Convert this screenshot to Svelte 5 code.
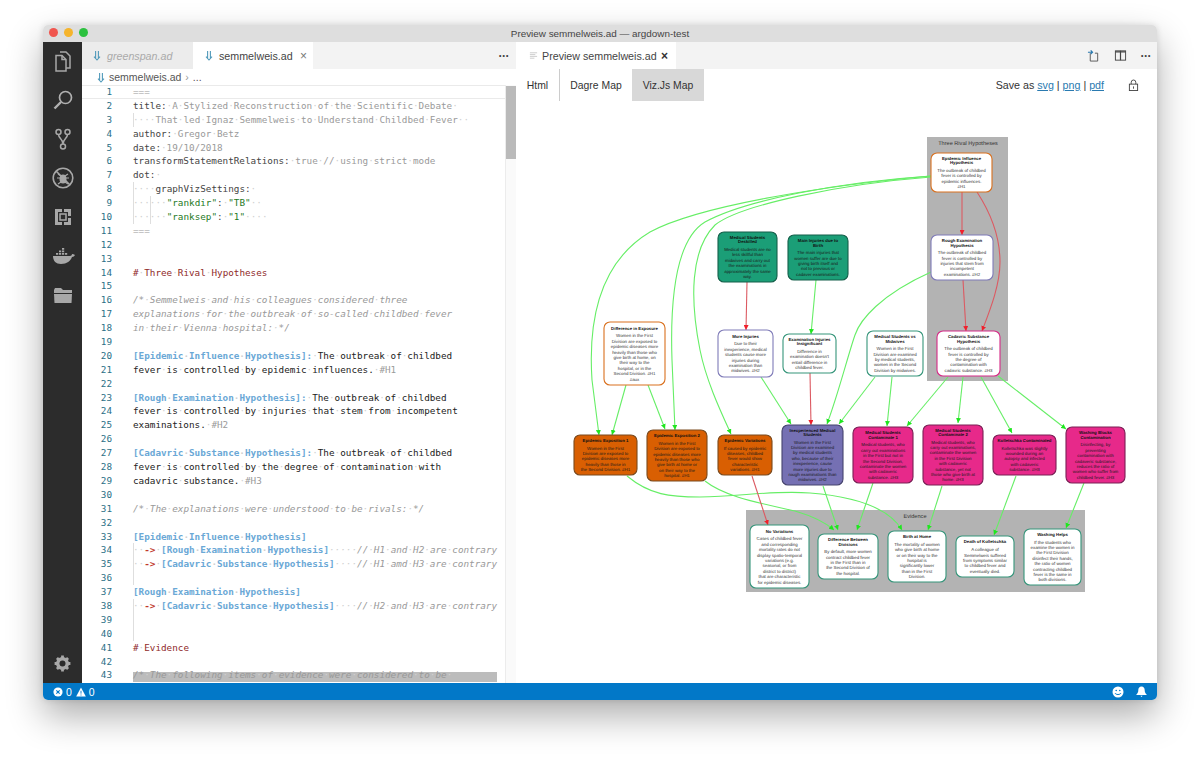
<script lang="ts">
  // VS Code window: Argdown source on the left, its rendered argument map on the right.
  type Seg = [string, string];

  const b = (s: string): Seg => ["ref", s];
  const t = (s: string): Seg => ["plain", s];
  const k = (s: string): Seg => ["key", s];
  const v = (s: string): Seg => ["val", s];
  const c = (s: string): Seg => ["comment", s];
  const h = (s: string): Seg => ["head", s];
  const a = (s: string): Seg => ["arrow", s];
  const g = (s: string): Seg => ["str", s];
  const tag = (s: string): Seg => ["val", s];
  const d = (s: string): Seg => ["fence", s];

  const code: Seg[][] = [
    [d("===")],
    [k("title:"), v(" A Stylized Reconstruction of the Scientific Debate ")],
    [v("    That led Ignaz Semmelweis to Understand Childbed Fever  ")],
    [k("author:"), v(" Gregor Betz")],
    [k("date:"), v(" 19/10/2018")],
    [k("transformStatementRelations:"), v(" true // using strict mode")],
    [k("dot:"), v(" ")],
    [v("    "), k("graphVizSettings:"), v(" ")],
    [v("      "), g('"rankdir"'), k(": "), g('"TB"'), v("  ")],
    [v("      "), g('"ranksep"'), k(": "), g('"1"'), v("    ")],
    [d("===")],
    [],
    [],
    [h("# Three Rival Hypotheses")],
    [],
    [c("/* Semmelweis and his colleagues considered three")],
    [c("explanations for the outbreak of so-called childbed fever")],
    [c("in their Vienna hospital: */")],
    [],
    [b("[Epidemic Influence Hypothesis]:"), t(" The outbreak of childbed")],
    [t("fever is controlled by epidemic influences. "), tag("#H1")],
    [],
    [b("[Rough Examination Hypothesis]:"), t(" The outbreak of childbed")],
    [t("fever is controlled by injuries that stem from incompetent")],
    [t("examinations. "), tag("#H2")],
    [],
    [b("[Cadavric Substance Hypothesis]:"), t(" The outbreak of childbed")],
    [t("fever is controlled by the degree of contamination with")],
    [t("cadavric substance. "), tag("#H3")],
    [],
    [c("/* The explanations were understood to be rivals: */")],
    [],
    [b("[Epidemic Influence Hypothesis]")],
    [v("  "), a("->"), v(" "), b("[Rough Examination Hypothesis]"), c("     // H1 and H2 are contrary")],
    [v("  "), a("->"), v(" "), b("[Cadavric Substance Hypothesis]"), c("    // H1 amd H3 are contrary")],
    [],
    [b("[Rough Examination Hypothesis]")],
    [v("  "), a("->"), v(" "), b("[Cadavric Substance Hypothesis]"), c("    // H2 and H3 are contrary")],
    [],
    [],
    [h("# Evidence")],
    [],
    [c("/* The following items of evidence were considered to be ")],
  ];

  // indent guide columns by line number
  const guides: Record<number, number[]> = {
    3: [0], 8: [0], 9: [0, 3], 10: [0, 3], 34: [0], 35: [0], 36: [0], 38: [0], 39: [0], 40: [0],
  };

  type Node = { x: number; y: number; w: number; h: number; kind: string; title: string[]; body: string[] };

  const nodes: Node[] = [
    { x: 931, y: 153, w: 61, h: 39, kind: "o-line", title: ["Epidemic Influence", "Hypothesis"], body: ["The outbreak of childbed", "fever is controlled by", "epidemic influences.", "#H1"] },
    { x: 931, y: 235, w: 62, h: 45, kind: "p-line", title: ["Rough Examination", "Hypothesis"], body: ["The outbreak of childbed", "fever is controlled by", "injuries that stem from", "incompetent", "examinations. #H2"] },
    { x: 937, y: 331, w: 63, h: 45, kind: "m-line", title: ["Cadavric Substance", "Hypothesis"], body: ["The outbreak of childbed", "fever is controlled by", "the degree of", "contamination with", "cadavric substance. #H3"] },
    { x: 718, y: 232, w: 59, h: 50, kind: "g-fill", title: ["Medical Students", "Deskilled"], body: ["Medical students are no", "less skillful than", "midwives and carry out", "the examinations in", "approximately the same", "way."] },
    { x: 788, y: 235, w: 60, h: 45, kind: "g-fill", title: ["Main Injuries due to", "Birth"], body: ["The main injuries that", "women suffer are due to", "giving birth itself and", "not to previous or", "cadaver examinations."] },
    { x: 604, y: 322, w: 61, h: 63, kind: "o-line", title: ["Difference in Exposure"], body: ["Women in the First", "Division are exposed to", "epidemic diseases more", "heavily than those who", "give birth at home, on", "their way to the", "hospital, or in the", "Second Division. #H1", "#aux"] },
    { x: 718, y: 330, w: 55, h: 47, kind: "p-line", title: ["More Injuries"], body: ["Due to their", "inexperience, medical", "students cause more", "injuries during", "examination than", "midwives. #H2"] },
    { x: 783, y: 334, w: 53, h: 39, kind: "g-line", title: ["Examination Injuries", "Insignificant"], body: ["Difference in", "examination doesn't", "entail difference in", "childbed fever."] },
    { x: 867, y: 331, w: 56, h: 45, kind: "g-line", title: ["Medical Students vs", "Midwives"], body: ["Women in the First", "Division are examined", "by medical students,", "women in the Second", "Division by midwives."] },
    { x: 574, y: 435, w: 63, h: 40, kind: "o-fill", title: ["Epidemic Exposition 1"], body: ["Women in the First", "Division are exposed to", "epidemic diseases more", "heavily than those in", "the Second Division. #H1"] },
    { x: 647, y: 430, w: 60, h: 51, kind: "o-fill", title: ["Epidemic Exposition 2"], body: ["Women in the First", "Division are exposed to", "epidemic diseases more", "heavily than those who", "give birth at home or", "on their way to the", "hospital. #H1"] },
    { x: 718, y: 435, w: 54, h: 40, kind: "o-fill", title: ["Epidemic Variations"], body: ["If caused by epidemic", "diseases, childbed", "fever would show", "characteristic", "variations. #H1"] },
    { x: 782, y: 425, w: 61, h: 60, kind: "p-fill", title: ["Inexperienced Medical", "Students"], body: ["Women in the First", "Division are examined", "by medical students", "who, because of their", "inexperience, cause", "more injuries due to", "rough examinations than", "midwives. #H2"] },
    { x: 853, y: 427, w: 60, h: 56, kind: "m-fill", title: ["Medical Students", "Contaminate 1"], body: ["Medical students, who", "carry out examinations", "in the First but not in", "the Second Division,", "contaminate the women", "with cadaveric", "substance. #H3"] },
    { x: 923, y: 425, w: 60, h: 60, kind: "m-fill", title: ["Medical Students", "Contaminate 2"], body: ["Medical students, who", "carry out examinations,", "contaminate the women", "in the First Division", "with cadaveric", "substance, yet not", "those who give birth at", "home. #H3"] },
    { x: 993, y: 435, w: 63, h: 40, kind: "m-fill", title: ["Kolletschka Contaminated"], body: ["Kolletschka was slightly", "wounded during an", "autopsy and infected", "with cadaveric", "substance. #H3"] },
    { x: 1066, y: 427, w: 59, h: 56, kind: "m-fill", title: ["Washing Blocks", "Contamination"], body: ["Disinfecting, by", "preventing", "contamination with", "cadaveric substance,", "reduces the ratio of", "women who suffer from", "childbed fever. #H3"] },
    { x: 750, y: 525, w: 59, h: 63, kind: "g-line", title: ["No Variations"], body: ["Cases of childbed fever", "and corresponding", "mortality rates do not", "display spatio-temporal", "variations (e.g.", "seasonal, or from", "district to district)", "that are characteristic", "for epidemic diseases."] },
    { x: 818, y: 534, w: 60, h: 45, kind: "g-line", title: ["Difference Between", "Divisions"], body: ["By default, more women", "contract childbed fever", "in the First than in", "the Second Division of", "the hospital."] },
    { x: 888, y: 531, w: 58, h: 51, kind: "g-line", title: ["Birth at Home"], body: ["The mortality of women", "who give birth at home", "or on their way to the", "hospital is", "significantly lower", "than in the First", "Division."] },
    { x: 956, y: 536, w: 58, h: 41, kind: "g-line", title: ["Death of Kolletschka"], body: ["A colleague of", "Semmelweis suffered", "from symptoms similar", "to childbed fever and", "eventually died."] },
    { x: 1024, y: 529, w: 57, h: 56, kind: "g-line", title: ["Washing Helps"], body: ["If the students who", "examine the women in", "the First Division", "disinfect their hands,", "the ratio of women", "contracting childbed", "fever is the same in", "both divisions."] },
  ];

  const greenEdges = [
    "M931 176C830 185 700 205 650 232C600 262 588 320 592 380L599 435",
    "M931 176C840 182 745 200 705 222C675 240 670 300 672 360L675 430",
    "M931 177C840 184 740 205 715 225C690 250 690 300 700 350C706 380 720 410 731 434",
    "M931 272C880 295 860 320 855 335C848 355 838 395 827 424",
    "M816 280L811 334",
    "M626 385L612 435",
    "M648 385L665 429",
    "M761 377L791 424",
    "M875 377L839 424",
    "M892 377L887 426",
    "M948 377L907 426",
    "M963 377L958 423",
    "M981 377L1012 433",
    "M998 376L1066 429",
    "M627 476C650 495 670 497 700 497C740 497 770 490 810 493C860 497 890 510 902 530",
    "M705 481C725 497 760 503 795 511C812 516 825 522 834 530",
    "M823 486L838 530",
    "M873 483L857 530",
    "M942 486L928 530",
    "M1016 476L994 535",
    "M1084 483L1066 528",
  ];

  const redEdges = [
    "M962 192L962 235",
    "M977 192C992 215 1000 240 1000 262C1000 285 990 310 982 331",
    "M963 280L966 331",
    "M747 282L746 330",
    "M810 373L811 425",
    "M752 476L768 525",
  ];

  const TITLE_LH = 4.2;
  const BODY_LH = 5.4;
  const GAP = 7.7;

  // first baseline of a centred title + body block
  function firstLine(n: Node) {
    const span = (n.title.length - 1) * TITLE_LH + GAP + (n.body.length - 1) * BODY_LH;
    return n.y + n.h / 2 - span / 2 + 1.6;
  }
</script>

{#snippet mdIcon()}
  <svg class="md" viewBox="0 0 8 11" width="8" height="11">
    <path d="M2.6 1v7M5.4 1v7M1 6.6L4 10l3-3.4" fill="none" stroke="#519aba" stroke-width="1.1" />
  </svg>
{/snippet}

<div class="page">
  <div class="window">
    <header class="titlebar">
      <div class="lights">
        <i class="red"></i><i class="yellow"></i><i class="green"></i>
      </div>
      <span>Preview semmelweis.ad — argdown-test</span>
    </header>

    <div class="body">
      <nav class="activity">
        <div class="act first">
          <svg viewBox="0 0 24 24" width="24" height="24" fill="none" stroke="#a8a8a8" stroke-width="1.5">
            <path d="M9 3h6l4 4v12h-4" /><path d="M5 6.5h6l4 4V22H5z" /><path d="M11 6.5v4h4" />
          </svg>
        </div>
        <div class="act">
          <svg viewBox="0 0 24 24" width="24" height="24" fill="none" stroke="#b0b0b0" stroke-width="1.7">
            <circle cx="14.5" cy="9.5" r="6" /><path d="M10 14L3.5 20.5" stroke-width="2.4" />
          </svg>
        </div>
        <div class="act">
          <svg viewBox="0 0 24 24" width="24" height="24" fill="none" stroke="#a8a8a8" stroke-width="1.5">
            <circle cx="7.5" cy="5" r="2.5" /><circle cx="16.5" cy="5" r="2.5" /><circle cx="12" cy="19.5" r="2.5" />
            <path d="M7.5 7.5c0 4 4.5 4 4.5 9.500M16.500 7.500c0 4-4.500 4-4.500 9.500" />
          </svg>
        </div>
        <div class="act">
          <svg viewBox="0 0 24 24" width="24" height="24" fill="none" stroke="#a8a8a8" stroke-width="1.6">
            <circle cx="12" cy="12" r="9.800" />
            <path d="M5 5l14 14" />
            <ellipse cx="12" cy="13" rx="3.500" ry="4.500" fill="#a8a8a8" stroke="none" />
            <path d="M6 12h12M7 8l3 2M17 8l-3 2M7 18l3-2M17 18l-3-2" stroke-width="1.200" />
          </svg>
        </div>
        <div class="act">
          <svg viewBox="0 0 24 24" width="24" height="24" fill="#a8a8a8">
            <path d="M4 4h7v3H7v10h4v3H4zM13 4h7v7h-3V7h-4zM17 13h3v7h-7v-3h4z" />
            <rect x="9" y="9" width="6" height="6" fill="none" stroke="#a8a8a8" stroke-width="1.500" />
          </svg>
        </div>
        <div class="act">
          <svg viewBox="0 0 24 24" width="24" height="24" fill="#a8a8a8">
            <path d="M2 12h17c1 0 2-1 2-2 1 0 2 .3 3 1-.6 1.300-1.600 2-3 2-1.500 4-5 7-11 7-5 0-8-3-8-8z" />
            <path d="M5 10.800h2.200V9H5zM8 10.800h2.200V9H8zM11 10.800h2.200V9H11zM14 10.800h2.200V9H14zM8 8.300h2.200V6.500H8zM11 8.300h2.200V6.500H11zM11 5.800h2.200V4H11z" />
          </svg>
        </div>
        <div class="act">
          <svg viewBox="0 0 24 24" width="24" height="24" fill="#a8a8a8">
            <path d="M3 7l1-2h6l2 2h9v3H3z" /><path d="M3 11h18l-.5 9H3.500z" />
          </svg>
        </div>
        <div class="act gear">
          <svg viewBox="0 0 24 24" width="19" height="19">
            <circle cx="12" cy="12" r="6" fill="none" stroke="#a8a8a8" stroke-width="4.500" />
            <path d="M12 2v20M2 12h20M5 5l14 14M19 5L5 19" stroke="#a8a8a8" stroke-width="3.500" />
            <circle cx="12" cy="12" r="3.800" fill="#2c2c2c" />
          </svg>
        </div>
      </nav>

      <section class="group left">
        <div class="tabs">
          <div class="tab inactive">{@render mdIcon()}<span>greenspan.ad</span></div>
          <div class="tab active">{@render mdIcon()}<span>semmelweis.ad</span><b class="close">×</b></div>
          <div class="actions"><span class="more">···</span></div>
        </div>
        <div class="crumbs">{@render mdIcon()}<span>semmelweis.ad</span><em>›</em><span>...</span></div>
        <div class="editor">
          <div class="code">
            {#each code as segs, i}
              <div class="line" class:current={i === 0} class:picked={i === 42}>
                <span class="num">{i + 1}</span>
                <span class="src">{#each guides[i + 1] ?? [] as col}<i class="guide" style="left: {col * 5.6}px"></i>{/each}{#each segs as [cls, text]}<span class={cls}>{#each text.split(/( )/) as tok}{#if tok === " "}<span class="ws">·</span>{:else}{tok}{/if}{/each}</span>{/each}</span>
              </div>
            {/each}
          </div>
          <div class="scrollbar"><div class="thumb"></div></div>
        </div>
      </section>

      <section class="group right">
        <div class="tabs">
          <div class="tab active preview">
            <svg viewBox="0 0 10 10" width="9" height="9" fill="none" stroke="#c8c8c8" stroke-width="1"><path d="M1 2h8M1 4h6M1 6h8M1 8h5" /></svg>
            <span>Preview semmelweis.ad</span><b class="close dark">×</b>
          </div>
          <div class="actions icons">
            <svg viewBox="0 0 14 14" width="13" height="13" fill="none" stroke="#555" stroke-width="1"><path d="M3.500 4.500v8.500h8V4.500h-3" /><path d="M1 3.500h5M4 1.500l2 2-2 2" stroke="#2a7ab0" stroke-width="1.200" /></svg>
            <svg viewBox="0 0 14 14" width="13" height="13" fill="none" stroke="#444" stroke-width="1"><rect x="1.500" y="2" width="11" height="10" /><path d="M1.500 3h11M7 2v10" stroke-width="1.300" /></svg>
            <span class="more">···</span>
          </div>
        </div>

        <div class="view-bar">
          <div class="view-tabs">
            <span class="view-tab first">Html</span>
            <span class="view-tab second">Dagre Map</span>
            <span class="view-tab on">Viz.Js Map</span>
          </div>
          <div class="save">Save as <a href="#svg">svg</a> | <a href="#png">png</a> | <a href="#pdf">pdf</a></div>
          <svg class="lock" viewBox="0 0 12 14" width="11" height="13" fill="none" stroke="#444" stroke-width="1">
            <rect x="1.500" y="5.500" width="9" height="7" /><path d="M3.500 5.500V3.500a2.500 2.500 0 0 1 5 0v2M6 8v2.500" />
          </svg>
        </div>

        <svg class="map" viewBox="516 101 641 582">
          <defs>
            <marker id="tip-green" viewBox="0 0 10 10" refX="10" refY="5" markerUnits="userSpaceOnUse" markerWidth="5" markerHeight="5" orient="auto">
              <path d="M0 0L10 5L0 10z" fill="#1fe61f" />
            </marker>
            <marker id="tip-red" viewBox="0 0 10 10" refX="10" refY="5" markerUnits="userSpaceOnUse" markerWidth="5" markerHeight="5" orient="auto">
              <path d="M0 0L10 5L0 10z" fill="#f0202c" />
            </marker>
          </defs>

          <rect class="cluster" x="927" y="137" width="81" height="244" />
          <rect class="cluster" x="746" y="510" width="339" height="82" />
          <text class="cluster-label" x="968" y="144.500">Three Rival Hypotheses</text>
          <text class="cluster-label" x="915" y="517.500">Evidence</text>

          {#each greenEdges as path}
            <path class="edge green" d={path} marker-end="url(#tip-green)" />
          {/each}
          {#each redEdges as path}
            <path class="edge red" d={path} marker-end="url(#tip-red)" />
          {/each}

          {#each nodes as n}
            {@const top = firstLine(n)}
            {@const bodyTop = top + (n.title.length - 1) * TITLE_LH + GAP}
            <g class={n.kind}>
              <rect x={n.x} y={n.y} width={n.w} height={n.h} rx="6" />
              {#each n.title as line, i}
                <text class="node-title" x={n.x + n.w / 2} y={top + i * TITLE_LH}>{line}</text>
              {/each}
              {#each n.body as line, i}
                <text class="node-body" x={n.x + n.w / 2} y={bodyTop + i * BODY_LH}>{line}</text>
              {/each}
            </g>
          {/each}
        </svg>
      </section>
    </div>

    <footer class="status">
      <svg viewBox="0 0 12 12" width="10" height="10"><circle cx="6" cy="6" r="5.500" fill="#fff" /><path d="M4 4l4 4M8 4l-4 4" stroke="#007acc" stroke-width="1.300" /></svg>
      <span>0</span>
      <svg class="warn" viewBox="0 0 12 12" width="10" height="10"><path d="M6 .5L11.800 11.500H.2z" fill="#fff" /><path d="M6 4.500v3.500M6 9v1.200" stroke="#007acc" stroke-width="1.100" /></svg>
      <span>0</span>
      <div class="status-right">
        <svg viewBox="0 0 12 12" width="12" height="12"><circle cx="6" cy="6" r="5.500" fill="#fff" /><circle cx="4.200" cy="4.500" r=".8" fill="#007acc" /><circle cx="7.800" cy="4.500" r=".8" fill="#007acc" /><path d="M3 7c.8 2 5.200 2 6 0" fill="none" stroke="#007acc" stroke-width="1" /></svg>
        <svg viewBox="0 0 12 12" width="11" height="11"><path d="M6 .5c2.500 0 3.500 2 3.500 4 0 2.500 1 3.500 2 4.500v.8H.5V9c1-1 2-2 2-4.500 0-2 1-4 3.500-4z" fill="#fff" /><path d="M4.800 10.500h2.400L6 12z" fill="#fff" /></svg>
      </div>
    </footer>
  </div>
</div>

<style>
  :global(body) {
    margin: 0;
    background: #fff;
    overflow: hidden;
  }

  .page {
    padding: 25px 43px 62px;
    font-family: "Liberation Sans", Arial, sans-serif;
  }

  .window {
    height: 675px;
    display: flex;
    flex-direction: column;
    border-radius: 5px;
    overflow: hidden;
    box-shadow: 0 16px 36px rgba(0, 0, 0, 0.32), 0 0 6px rgba(0, 0, 0, 0.12);
  }

  .titlebar {
    position: relative;
    height: 17px;
    flex-shrink: 0;
    background: #dedede;
    display: flex;
    align-items: center;
    justify-content: center;
    font-size: 9.9px;
    color: #444;
  }

  .lights {
    position: absolute;
    left: 6px;
    top: 3px;
    display: flex;
    gap: 6px;
  }

  .lights i {
    width: 9px;
    height: 9px;
    border-radius: 50%;
  }

  .lights .red { background: #f0564f; }
  .lights .yellow { background: #f5b42c; }
  .lights .green { background: #2cc13f; }

  .body {
    flex: 1;
    min-height: 0;
    display: flex;
  }

  .activity {
    width: 39px;
    flex-shrink: 0;
    background: #2c2c2c;
    display: flex;
    flex-direction: column;
  }

  .act {
    height: 39px;
    flex-shrink: 0;
    display: flex;
    align-items: center;
    justify-content: center;
  }

  .act.first {
    margin-top: -1px;
  }

  .gear {
    margin-top: auto;
  }

  .group {
    display: flex;
    flex-direction: column;
    min-width: 0;
    background: #fff;
  }

  .left {
    width: 434px;
    flex-shrink: 0;
  }

  .right {
    flex: 1;
  }

  .tabs {
    height: 27px;
    flex-shrink: 0;
    display: flex;
    background: #f3f3f3;
  }

  .tab {
    display: flex;
    align-items: center;
    font-size: 10.7px;
    color: #555;
    white-space: nowrap;
  }

  .tab.inactive {
    width: 111px;
    padding-left: 11px;
    gap: 6px;
    box-sizing: border-box;
    background: #ececec;
    color: #aaa;
    font-style: italic;
  }

  .tab.active {
    width: 120px;
    padding-left: 12px;
    gap: 6px;
    box-sizing: border-box;
    background: #fff;
    color: #444;
  }

  .tab.preview {
    width: 160px;
    padding-left: 13px;
    gap: 4px;
  }

  .close {
    margin-left: auto;
    margin-right: 6px;
    font-size: 12px;
    font-weight: 400;
    color: #777;
  }

  .close.dark {
    margin-right: 8px;
    color: #333;
    font-weight: 700;
  }

  .actions {
    margin-left: auto;
    display: flex;
    align-items: center;
    padding-right: 7px;
    color: #444;
  }

  .actions.icons {
    gap: 14px;
    padding-right: 6px;
  }

  .more {
    font-weight: 700;
    font-size: 12px;
    letter-spacing: -0.5px;
  }

  .crumbs {
    height: 16px;
    flex-shrink: 0;
    display: flex;
    align-items: center;
    gap: 4px;
    padding-left: 15px;
    font-size: 10.5px;
    color: #555;
  }

  .crumbs em {
    font-style: normal;
    color: #999;
  }

  .md {
    flex-shrink: 0;
  }

  .editor {
    flex: 1;
    min-height: 0;
    display: flex;
    overflow: hidden;
  }

  .code {
    flex: 1;
    min-width: 0;
    overflow: hidden;
    font-family: "DejaVu Sans Mono", "Liberation Mono", monospace;
    font-size: 9.3px;
    line-height: 13.9px;
  }

  .line {
    display: flex;
    height: 13.9px;
    white-space: pre;
  }

  .line.current {
    box-shadow: inset 0 1px #eaeaea, inset 0 -1px #eaeaea;
  }

  .num {
    width: 30px;
    flex-shrink: 0;
    text-align: right;
    color: #2b6f86;
    margin-right: 21px;
  }

  .src {
    position: relative;
    flex: 1;
    min-width: 0;
  }

  .picked .src {
    background: linear-gradient(to bottom, transparent 4px, #bcbcbc 4px);
    margin-right: 8px;
  }

  .guide {
    position: absolute;
    top: 0;
    bottom: 0;
    width: 1px;
    background: #dedede;
  }

  .ws { color: #d0d0d0; }
  .key { color: #444; }
  .val { color: #9a9a9a; }
  .fence { color: #bbb; }
  .str { color: #1f7a1f; }
  .head { color: #8f2a2a; }
  .plain { color: #222; }
  .comment { color: #999; font-style: italic; }
  .ref { color: #6aa8d6; font-weight: 700; }
  .arrow { color: #c0392b; font-weight: 700; }

  .scrollbar {
    width: 10px;
    flex-shrink: 0;
    background: #fafafa;
    border-left: 1px solid #ececec;
  }

  .thumb {
    height: 73px;
    margin-top: 1px;
    background: #bababa;
  }

  .view-bar {
    height: 32px;
    flex-shrink: 0;
    display: flex;
    align-items: center;
    font-size: 10.4px;
    color: #333;
  }

  .view-tabs {
    display: flex;
    align-self: stretch;
  }

  .view-tab {
    display: flex;
    align-items: center;
    justify-content: center;
    box-sizing: border-box;
    width: 72px;
  }

  .view-tab.first {
    width: 44px;
    border-right: 1px solid #ccc;
  }

  .view-tab.on {
    background: #d8d8d8;
  }

  .save {
    margin-left: auto;
    font-size: 10.7px;
  }

  .save a {
    color: #2a7ab0;
  }

  .lock {
    margin: 0 18px 0 24px;
  }

  .map {
    display: block;
    flex: 1;
    min-height: 0;
    width: 100%;
    text-rendering: geometricPrecision;
  }

  .cluster { fill: #b3b3b3; }

  .cluster-label {
    font-size: 5.6px;
    fill: #333;
    text-anchor: middle;
  }

  .edge {
    fill: none;
    stroke-width: 1.1;
  }

  .edge.green { stroke: #66ee66; }
  .edge.red { stroke: #dc5a62; stroke-width: 1.1; }

  g rect { stroke-width: 1.1; fill: #fff; }

  .o-line rect { stroke: #d9701e; }
  .p-line rect { stroke: #7f7bb8; }
  .m-line rect { stroke: #d62b87; }
  .g-line rect { stroke: #35957a; }
  .o-fill rect { fill: #d95f02; stroke: #7a4a1e; }
  .g-fill rect { fill: #1b9e77; stroke: #155f4a; }
  .p-fill rect { fill: #7570b3; stroke: #46446e; }
  .m-fill rect { fill: #e7298a; stroke: #7a2055; }

  .node-title {
    font-size: 4.3px;
    font-weight: 700;
    fill: #111;
    text-anchor: middle;
  }

  .node-body {
    font-size: 4.4px;
    fill: #333;
    text-anchor: middle;
  }

  .o-fill .node-body, .g-fill .node-body, .p-fill .node-body, .m-fill .node-body {
    fill: #1a1a1a;
  }

  .status {
    height: 17px;
    flex-shrink: 0;
    background: #0278c8;
    display: flex;
    align-items: center;
    gap: 3px;
    padding: 0 10px;
    font-size: 10.5px;
    color: #fff;
  }

  .warn {
    margin-left: 1px;
  }

  .status-right {
    margin-left: auto;
    display: flex;
    align-items: center;
    gap: 12px;
  }
</style>
